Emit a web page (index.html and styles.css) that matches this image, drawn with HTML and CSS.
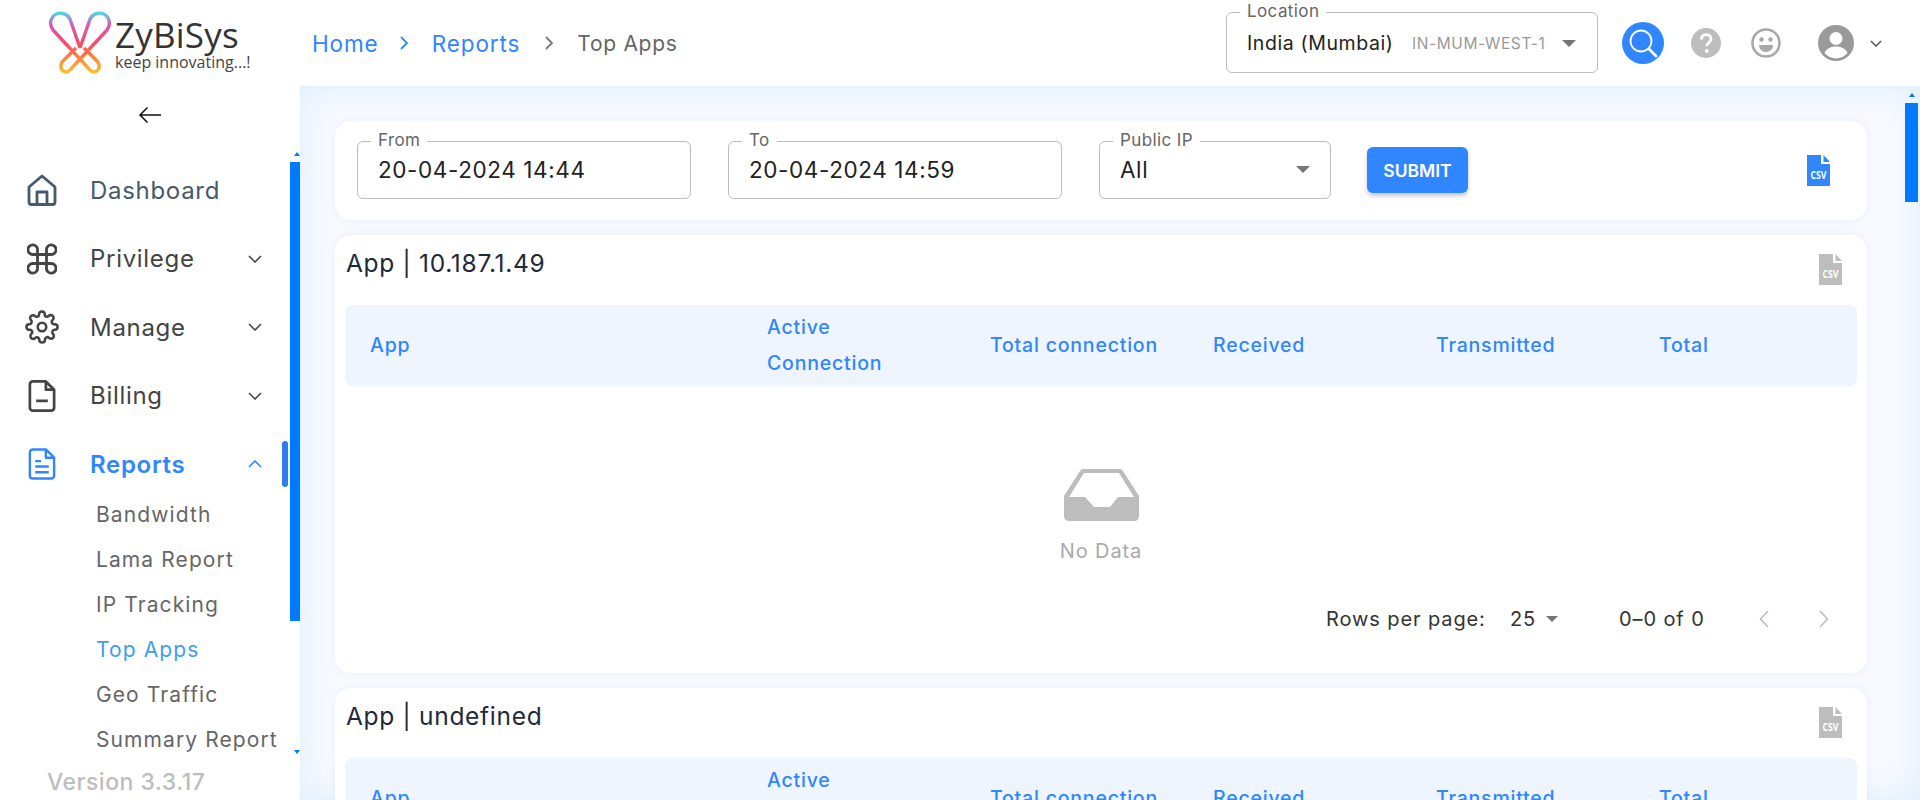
FILE: index.html
```html
<!DOCTYPE html>
<html lang="en">
<head>
<meta charset="utf-8">
<title>Top Apps</title>
<link rel="stylesheet" href="styles.css">
</head>
<body>
<svg class="defs" width="0" height="0" aria-hidden="true">
  <defs>
    <linearGradient id="logoGrad" gradientUnits="userSpaceOnUse" x1="0" y1="14" x2="0" y2="76">
      <stop offset="0" stop-color="#45dcf0"/>
      <stop offset=".2" stop-color="#d95cb0"/>
      <stop offset=".5" stop-color="#f54a6e"/>
      <stop offset=".72" stop-color="#fb8040"/>
      <stop offset="1" stop-color="#fbc52e"/>
    </linearGradient>
    <symbol id="csv" viewBox="0 0 23 31">
      <path fill="currentColor" d="M0 0H14V9H23V31H0Z"/>
      <path fill="currentColor" d="M16.500 0L23 7H16.500Z"/>
      <text x="11.5" y="24" text-anchor="middle" class="csv-text" textLength="16" lengthAdjust="spacingAndGlyphs">CSV</text>
    </symbol>
    <symbol id="chev" viewBox="0 0 14 8">
      <path d="M1 1l6 6 6-6" fill="none" stroke="currentColor" stroke-width="1.6"/>
    </symbol>
    <symbol id="inbox" viewBox="0 0 75 52">
      <path fill="#bdbdbd" fill-rule="evenodd" d="M19 0H56Q58 0 59 2L75 27V47Q75 52 70 52H5Q0 52 0 47V27L16 2Q17 0 19 0ZM20 4L5 28H21L30 38H46L54 28H70L55 4Z"/>
    </symbol>
  </defs>
</svg>

<header class="topbar">
  <div class="logo">
    <svg class="logo-mark" viewBox="48 12 66 66" aria-hidden="true">
      <g fill="none" stroke="url(#logoGrad)" stroke-width="3.400" stroke-linejoin="round">
        <path d="M80 50L71 24C68 13 56 13 52 20C49 25 51 29 53 32L90 72C94 76 100 73 99 67C99 65 98 64 97 63L84 50"/>
        <path d="M80 50L89 24C92 13 104 13 108 20C111 25 109 29 107 32L70 72C66 76 60 73 61 67C61 65 62 64 63 63L76 50"/>
      </g>
    </svg>
    <div class="logo-text">
      <span class="logo-name">ZyBiSys</span>
      <span class="logo-tag">keep innovating...!</span>
    </div>
  </div>

  <nav class="crumbs">
    <a class="crumb">Home</a>
    <svg class="crumb-sep" viewBox="0 0 8 14"><path d="M1 1l6 6-6 6" fill="none" stroke="currentColor" stroke-width="1.8"/></svg>
    <a class="crumb">Reports</a>
    <svg class="crumb-sep grey" viewBox="0 0 8 14"><path d="M1 1l6 6-6 6" fill="none" stroke="currentColor" stroke-width="1.8"/></svg>
    <span class="crumb current">Top Apps</span>
  </nav>

  <div class="top-actions">
    <fieldset class="field location">
      <legend>Location</legend>
      <div class="field-row">
        <span class="loc-name">India (Mumbai)</span>
        <span class="loc-code">IN-MUM-WEST-1</span>
        <span class="caret"></span>
      </div>
    </fieldset>
    <span class="btn-search">
      <svg viewBox="0 0 42 42" width="42" height="42"><circle cx="19" cy="19" r="10.500" fill="none" stroke="#fff" stroke-width="1.800"/><path d="M27 27l7 7" stroke="#fff" stroke-width="2.800" stroke-linecap="round"/></svg>
    </span>
    <svg class="ico-help" viewBox="0 0 30 30" width="30" height="30"><circle cx="15" cy="15" r="15" fill="#bdbdbd"/><path d="M10.5 11.5c0-3 2-4.800 4.800-4.800s4.700 1.800 4.700 4.200c0 3.600-4.300 3.800-4.300 7.300" fill="none" stroke="#fff" stroke-width="2.800"/><circle cx="15.700" cy="23" r="1.900" fill="#fff"/></svg>
    <svg class="ico-smile" viewBox="0 0 30 30" width="30" height="30"><circle cx="15" cy="15" r="13.500" fill="none" stroke="#a8a8a8" stroke-width="2.600"/><circle cx="10.500" cy="11.500" r="2.200" fill="#a8a8a8"/><circle cx="19.500" cy="11.500" r="2.200" fill="#a8a8a8"/><path d="M8 17h14c0 4-3 7-7 7s-7-3-7-7z" fill="#a8a8a8"/></svg>
    <svg class="ico-user" viewBox="0 0 36 36" width="36" height="36"><circle cx="18" cy="18" r="18" fill="#9a9a9a"/><circle cx="18" cy="13.500" r="6.500" fill="#fff"/><path d="M6.500 28c2-5 7-6.500 11.500-6.500s9.500 1.500 11.500 6.500c-3 3.400-7 5.400-11.500 5.400S9.500 31.400 6.500 28z" fill="#fff"/></svg>
    <svg class="ico-chev" width="12" height="7"><use href="#chev"/></svg>
  </div>
</header>

<div class="shell">
  <aside class="sidebar">
    <div class="back">
      <svg viewBox="0 0 24 18" width="24" height="18"><path d="M23 9H2M9.500 1.500L2 9l7.500 7.500" fill="none" stroke="#111" stroke-width="1.500"/></svg>
    </div>
    <div class="menu">
      <ul class="menu-list">
        <li class="item home">
          <svg class="item-ico" viewBox="0 0 30 32"><path d="M2 13L15 2l13 11v15a2.500 2.500 0 0 1-2.500 2.500h-21A2.500 2.500 0 0 1 2 28z M10 30.500V18h10v12.500" fill="none" stroke="currentColor" stroke-width="2.800" stroke-linejoin="round"/></svg>
          <span>Dashboard</span>
        </li>
        <li class="item">
          <svg class="item-ico" viewBox="0 0 30 30"><path d="M10.500 10.500h9v9h-9zM10.500 10.500V6.300a4.800 4.800 0 1 0-4.800 4.200zM19.500 10.500V6.300a4.800 4.800 0 1 1 4.800 4.200zM10.500 19.500v4.200a4.800 4.800 0 1 1-4.800-4.200zM19.500 19.500v4.200a4.800 4.800 0 1 0 4.800-4.200z" fill="none" stroke="currentColor" stroke-width="2.800"/></svg>
          <span>Privilege</span>
          <svg class="item-chev" width="14" height="8"><use href="#chev"/></svg>
        </li>
        <li class="item">
          <svg class="item-ico gear" viewBox="0 0 24 24"><circle cx="12" cy="12" r="3" fill="none" stroke="currentColor" stroke-width="1.800"/><path d="M19.400 15a1.650 1.650 0 0 0 .33 1.820l.06.06a2 2 0 1 1-2.830 2.830l-.06-.06a1.650 1.650 0 0 0-2.820 1.170V21a2 2 0 1 1-4 0v-.09a1.650 1.650 0 0 0-2.800-1.170l-.06.06a2 2 0 1 1-2.830-2.830l.06-.06A1.650 1.650 0 0 0 3.090 14H3a2 2 0 1 1 0-4h.09A1.650 1.650 0 0 0 4.260 7.200l-.06-.06a2 2 0 1 1 2.830-2.830l.06.06A1.650 1.650 0 0 0 9.900 3.190V3a2 2 0 1 1 4 0v.09a1.650 1.650 0 0 0 2.800 1.170l.06-.06a2 2 0 1 1 2.830 2.830l-.06.06A1.650 1.650 0 0 0 20.910 10H21a2 2 0 1 1 0 4h-.09a1.650 1.650 0 0 0-1.510 1z" fill="none" stroke="currentColor" stroke-width="1.800"/></svg>
          <span>Manage</span>
          <svg class="item-chev" width="14" height="8"><use href="#chev"/></svg>
        </li>
        <li class="item">
          <svg class="item-ico" viewBox="0 0 28 33"><path d="M4.500 1.500H18L26.500 10v18.500a3 3 0 0 1-3 3h-19a3 3 0 0 1-3-3v-24a3 3 0 0 1 3-3zM18 1.500V10h8.500M8 21.500h12" fill="none" stroke="currentColor" stroke-width="2.800" stroke-linejoin="round"/></svg>
          <span>Billing</span>
          <svg class="item-chev" width="14" height="8"><use href="#chev"/></svg>
        </li>
        <li class="item active">
          <svg class="item-ico" viewBox="0 0 28 33"><path d="M4.500 1.500H18L26.500 10v18.500a3 3 0 0 1-3 3h-19a3 3 0 0 1-3-3v-24a3 3 0 0 1 3-3zM18 1.500V10h8.500M7 13.500h6M7 19h14M7 25h14" fill="none" stroke="currentColor" stroke-width="2.500" stroke-linejoin="round"/></svg>
          <span>Reports</span>
          <svg class="item-chev up" width="14" height="8"><use href="#chev"/></svg>
          <i class="active-bar"></i>
        </li>
        <li class="sub">Bandwidth</li>
        <li class="sub">Lama Report</li>
        <li class="sub">IP Tracking</li>
        <li class="sub on">Top Apps</li>
        <li class="sub">Geo Traffic</li>
        <li class="sub">Summary Report</li>
      </ul>
      <i class="sb-arrow up menu-up"></i>
      <i class="sb-thumb menu-thumb"></i>
      <i class="sb-arrow down menu-down"></i>
    </div>
    <div class="version">Version 3.3.17</div>
  </aside>

  <main class="main">
    <div class="main-inner">
      <section class="card filter">
        <fieldset class="field f-date"><legend>From</legend><div class="field-row value">20-04-2024 14:44</div></fieldset>
        <fieldset class="field f-date"><legend>To</legend><div class="field-row value">20-04-2024 14:59</div></fieldset>
        <fieldset class="field f-ip"><legend>Public IP</legend><div class="field-row value between"><span>All</span><span class="caret"></span></div></fieldset>
        <button class="submit" type="button">SUBMIT</button>
        <svg class="csv blue" width="23" height="31"><use href="#csv"/></svg>
      </section>

      <section class="card data">
        <div class="card-head">
          <h2>App | 10.187.1.49</h2>
          <svg class="csv" width="23" height="31"><use href="#csv"/></svg>
        </div>
        <div class="thead">
          <div>App</div><div>Active<br>Connection</div><div>Total connection</div><div>Received</div><div>Transmitted</div><div>Total</div>
        </div>
        <div class="empty">
          <svg width="75" height="52"><use href="#inbox"/></svg>
          <p>No Data</p>
        </div>
        <div class="pager">
          <span class="rows">Rows per page:</span>
          <span class="rows-val">25</span><span class="caret small"></span>
          <span class="range">0–0 of 0</span>
          <svg class="pg" viewBox="0 0 10 18" width="10" height="18"><path d="M9 1L1.500 9 9 17" fill="none" stroke="currentColor" stroke-width="1.600"/></svg>
          <svg class="pg" viewBox="0 0 10 18" width="10" height="18"><path d="M1 1l7.500 8L1 17" fill="none" stroke="currentColor" stroke-width="1.600"/></svg>
        </div>
      </section>

      <section class="card data">
        <div class="card-head">
          <h2>App | undefined</h2>
          <svg class="csv" width="23" height="31"><use href="#csv"/></svg>
        </div>
        <div class="thead">
          <div>App</div><div>Active<br>Connection</div><div>Total connection</div><div>Received</div><div>Transmitted</div><div>Total</div>
        </div>
      </section>
    </div>
    <i class="sb-arrow up main-up"></i>
    <i class="sb-thumb main-thumb"></i>
  </main>
</div>
</body>
</html>
```

FILE: styles.css
```css
* { box-sizing: border-box; }
html, body { margin: 0; height: 100%; overflow: hidden; }
body {
  display: flex;
  flex-direction: column;
  font-family: Inter, "Noto Sans", sans-serif;
  color: #333;
  background: #fff;
}
.defs { position: absolute; }
.csv-text { font: 700 10.500px "Open Sans", sans-serif; fill: #fff; }

/* top bar */
.topbar {
  height: 86px;
  flex: none;
  display: flex;
  align-items: center;
  background: #fff;
}
.logo {
  width: 312px;
  flex: none;
  display: flex;
  align-items: center;
  padding-left: 48px;
  gap: 1px;
}
.logo-mark { width: 66px; height: 66px; flex: none; }
.logo-text { display: flex; flex-direction: column; font-family: "Open Sans", sans-serif; color: #333; padding-top: 2px; }
.logo-name { font-size: 35px; line-height: 36px; letter-spacing: .2px; }
.logo-tag { font-size: 16px; line-height: 18px; color: #444; }

.crumbs { display: flex; align-items: center; font-size: 22.500px; letter-spacing: .9px; }
.crumb { color: #2f86ff; }
.crumb.current { color: #666; font-size: 21px; letter-spacing: .7px; }
.crumb-sep { width: 8px; height: 14px; color: #2f86ff; margin: 0 24px 0 21px; flex: none; }
.crumb-sep.grey { color: #777; margin: 0 24px 0 25px; }

.top-actions { margin-left: auto; display: flex; align-items: center; padding-right: 38px; }

/* notched fields */
.field {
  margin: 0;
  padding: 0 0 0 20px;
  border: 1px solid #bdbdbd;
  border-radius: 6px;
  height: 73px;
  min-width: 0;
}
.field legend {
  padding: 0 7px 2px;
  margin-left: -7px;
  font-size: 17px;
  line-height: 22px;
  letter-spacing: .4px;
  color: #666;
}
.field-row { display: flex; align-items: center; height: 38px; }
.location { width: 372px; margin-bottom: 13px; margin-right: 24px; }
.loc-name { font-size: 19.500px; letter-spacing: .6px; color: #222; width: 165px; flex: none; }
.loc-code { font-size: 15.500px; letter-spacing: .6px; color: #999; width: 150px; flex: none; }
.caret {
  width: 0; height: 0;
  border-left: 7px solid transparent;
  border-right: 7px solid transparent;
  border-top: 7px solid #757575;
  flex: none;
}
.caret.small { border-left-width: 6px; border-right-width: 6px; border-top-width: 6px; }

.btn-search {
  width: 42px; height: 42px; border-radius: 50%;
  background: #2f86ff;
  flex: none;
  display: block;
  margin-right: 27px;
}
.btn-search svg { display: block; }
.ico-help { margin-right: 30px; flex: none; }
.ico-smile { margin-right: 37px; flex: none; }
.ico-user { margin-right: 16px; flex: none; }
.ico-chev { color: #555; flex: none; }

/* shell */
.shell { flex: 1; min-height: 0; display: flex; }

/* sidebar */
.sidebar {
  width: 300px;
  flex: none;
  display: flex;
  flex-direction: column;
  background: #fff;
}
.back { height: 64px; flex: none; padding: 20px 0 0 138px; }
.back svg { display: block; }
.menu {
  position: relative;
  height: 607px;
  flex: none;
  overflow: hidden;
}
.menu-list { list-style: none; margin: 0; padding: 6px 10px 0 0; }
.item {
  position: relative;
  display: flex;
  align-items: center;
  height: 68.500px;
  padding-left: 27px;
  font-size: 24px;
  letter-spacing: .7px;
  color: #444;
}
.item.home { color: #455a6b; }
.item-ico { width: 30px; height: 32px; flex: none; margin-right: 33px; }
.item-ico.gear { width: 34px; height: 34px; margin-left: -2px; margin-right: 31px; }
.item-chev { margin-left: auto; margin-right: 28px; color: #444; flex: none; }
.item.active { color: #2f86ff; font-weight: 600; margin-bottom: -7px; }
.item.active .item-chev { color: #2f86ff; transform: rotate(180deg); }
.active-bar {
  position: absolute;
  right: 2px;
  top: 11px;
  width: 6px;
  height: 46px;
  border-radius: 3px;
  background: #2f7bf0;
}
.sub {
  height: 45px;
  line-height: 45px;
  padding-left: 96px;
  font-size: 21px;
  letter-spacing: 1.100px;
  white-space: nowrap;
  color: #666;
}
.sub.on { color: #3f9df0; }
.version { padding: 11px 0 0 47px; font-size: 23px; letter-spacing: .5px; color: #bdbdbd; font-weight: 500; }

/* painted scrollbars */
.sb-thumb { position: absolute; background: #007bff; }
.sb-arrow { position: absolute; width: 0; height: 0; border-left: 3.500px solid transparent; border-right: 3.500px solid transparent; }
.sb-arrow.up { border-bottom: 4px solid #007bff; }
.sb-arrow.down { border-top: 4px solid #007bff; }
.menu-thumb { right: 0; top: 12px; width: 10px; height: 459px; }
.menu-up { right: 0; top: 2px; }
.menu-down { right: 0; bottom: 3px; }
.main-thumb { right: 2px; top: 17px; width: 13px; height: 99px; }
.main-up { right: 5px; top: 7px; }

/* main */
.main {
  position: relative;
  flex: 1;
  min-width: 0;
  overflow: hidden;
  background: #f8faff;
  box-shadow: inset 0 0 36px #dcedfb;
}
.main-inner {
  padding: 35px 53px 0 35px;
  display: flex;
  flex-direction: column;
  gap: 15px;
}
.card {
  background: #fff;
  border-radius: 16px;
  box-shadow: 0 0 8px rgba(190, 220, 250, .3);
}

/* filter */
.filter {
  height: 99px;
  display: flex;
  align-items: flex-start;
  padding: 8px 37px 0 22px;
  flex: none;
}
.f-date { width: 334px; margin-right: 37px; height: 70px; padding-left: 20px; }
.f-ip { width: 232px; margin-right: 36px; height: 70px; padding-left: 20px; }
.field-row.value { height: 32px; font-size: 22.500px; letter-spacing: .6px; color: #222; }
.between { justify-content: space-between; padding-right: 20px; }
.submit {
  width: 101px;
  height: 46px;
  margin-top: 18px;
  border: 0;
  border-radius: 6px;
  background: #2f86ff;
  color: #fff;
  font: 600 17.500px Inter, sans-serif;
  box-shadow: 0 3px 4px rgba(0, 0, 0, .22);
}
.csv { color: #bdbdbd; flex: none; display: block; }
.csv.blue { color: #2f86ff; margin-left: auto; margin-top: 26px; }

/* data card */
.data { padding: 0 10px; flex: none; }
.data .card-head {
  height: 70px;
  display: flex;
  align-items: flex-start;
  justify-content: space-between;
  padding: 0 15px 0 1px;
}
.card-head h2 {
  margin: 12px 0 0;
  font-size: 24.500px;
  letter-spacing: .7px;
  line-height: 32px;
  font-weight: 400;
  color: #1e293b;
}
.card-head .csv { margin-top: 19px; }
.thead {
  display: grid;
  grid-template-columns: 397px repeat(5, 223px);
  align-items: center;
  height: 81px;
  padding-bottom: 2px;
  border-radius: 8px;
  background: #eef5fe;
  color: #2f86ff;
  font-size: 19.500px;
  letter-spacing: .8px;
  font-weight: 500;
  line-height: 36px;
}
.thead div { padding-left: 25px; }
.empty {
  height: 204px;
  padding-top: 83px;
  display: flex;
  flex-direction: column;
  align-items: center;
}
.empty svg { display: block; flex: none; }
.empty p { margin: 18px 0 0; font-size: 20px; letter-spacing: .9px; line-height: 24px; color: #aaa; }
.pager {
  height: 83px;
  padding-bottom: 25px;
  display: flex;
  align-items: center;
  font-size: 20px;
  letter-spacing: .9px;
  color: #333;
  padding-left: 981px;
}
.rows { width: 184px; flex: none; white-space: nowrap; }
.rows-val { width: 36px; flex: none; }
.range { margin-left: 61px; width: 140px; flex: none; white-space: nowrap; }
.pg { color: #bdbdbd; flex: none; margin-right: 50px; }
```
